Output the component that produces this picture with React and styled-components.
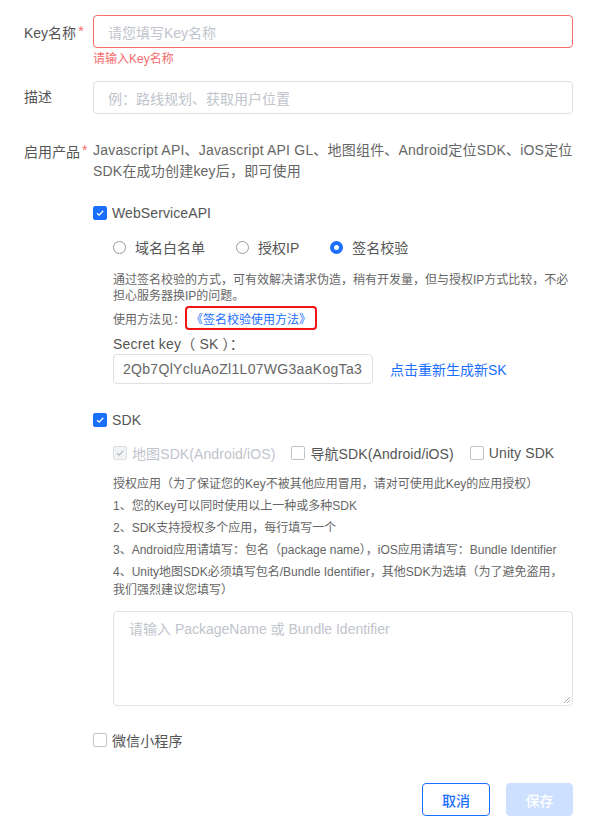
import styled, { createGlobalStyle, css } from "styled-components";

const GlobalStyle = createGlobalStyle`
  body {
    margin: 0;
    background: #fff;
    font-family: "Liberation Sans", "Noto Sans CJK SC", sans-serif;
    color: #555;
  }
`;

const blue = "#1a6fff";

const PageUI = styled.div`
  width: 597px;
  box-sizing: border-box;
  padding: 15px 24px 20px 24px;
`;

const RowUI = styled.div`
  display: grid;
  grid-template-columns: 69px minmax(0, 1fr);
  margin-bottom: ${(p) => p.$gap || 0}px;
`;

const LabelUI = styled.div`
  font-size: 14px;
  color: #555;
  line-height: ${(p) => p.$lh || 33}px;
  white-space: nowrap;
  & b {
    color: #f56c6c;
    font-weight: normal;
    margin-left: 2px;
    vertical-align: 2px;
  }
`;

const InputUI = styled.div`
  box-sizing: border-box;
  height: ${(p) => p.$h || 33}px;
  width: ${(p) => (p.$w ? p.$w + "px" : "100%")};
  border: 1px solid ${(p) => (p.$error ? "#f56c6c" : "#dcdfe6")};
  border-radius: 4px;
  padding: 0 ${(p) => p.$pad || 14}px;
  display: flex;
  align-items: center;
  font-size: 14px;
  letter-spacing: ${(p) => (p.$value ? "0.3px" : "0")};
  color: ${(p) => (p.$value ? "#666" : "#c0c4cc")};
  white-space: nowrap;
  overflow: hidden;
`;

const ErrorUI = styled.div`
  font-size: 12px;
  line-height: 18px;
  margin-top: 2px;
  color: #f56c6c;
`;

const IntroUI = styled.div`
  font-size: 14px;
  line-height: 21px;
  letter-spacing: 0.2px;
  color: #666;
`;

const CheckRowUI = styled.div`
  display: flex;
  align-items: center;
  height: 20px;
  white-space: nowrap;
  margin-top: ${(p) => p.$mt || 0}px;
`;

const CheckItemUI = styled.label`
  display: flex;
  align-items: center;
  gap: 5px;
  font-size: 14px;
  letter-spacing: 0.1px;
  color: ${(p) => (p.$disabled ? "#c0c4cc" : "#555")};
  margin-right: 16px;
`;

const BoxUI = styled.span`
  box-sizing: border-box;
  width: 14px;
  height: 14px;
  border-radius: 2px;
  border: 1px solid #bfc3cb;
  background: #fff;
  display: flex;
  align-items: center;
  justify-content: center;
  ${(p) =>
    p.$checked &&
    css`
      background: ${blue};
      border-color: ${blue};
    `}
  ${(p) =>
    p.$disabled &&
    css`
      background: #f2f3f5;
      border-color: #dcdfe6;
    `}
`;

const RadioItemUI = styled.label`
  display: flex;
  align-items: center;
  gap: 9px;
  font-size: 14px;
  color: #555;
  margin-right: 31px;
`;

const CircleUI = styled.span`
  box-sizing: border-box;
  width: 13px;
  height: 13px;
  border-radius: 50%;
  border: ${(p) => (p.$checked ? `4px solid ${blue}` : "1px solid #9a9a9a")};
  background: #fff;
`;

const SubUI = styled.div`
  margin-left: 20px;
`;

const SmallUI = styled.div`
  font-size: 12px;
  line-height: ${(p) => p.$lh || 16}px;
  color: #666;
  margin-top: ${(p) => p.$mt || 0}px;
`;

const UsageUI = styled.div`
  display: flex;
  align-items: center;
  font-size: 12px;
  color: #666;
  margin-top: 2px;
`;

const LinkBoxUI = styled.a`
  box-sizing: border-box;
  height: 24px;
  padding: 0 4px;
  border: 2px solid #f01414;
  border-radius: 4px;
  display: flex;
  align-items: center;
  color: ${blue};
  text-decoration: none;
`;

const SecretLabelUI = styled.div`
  font-size: 14px;
  line-height: 20px;
  letter-spacing: 0.2px;
  color: #555;
  margin-top: 4px;
`;

const SecretRowUI = styled.div`
  display: flex;
  align-items: center;
  gap: 17px;
`;

const RegenUI = styled.a`
  font-size: 14px;
  color: ${blue};
  text-decoration: none;
`;

const TextareaUI = styled.div`
  position: relative;
  box-sizing: border-box;
  height: 95px;
  margin-top: 12px;
  border: 1px solid #e0e2e8;
  border-radius: 4px;
  padding: 7px 15px;
  font-size: 14px;
  line-height: 20px;
  color: #c0c4cc;
`;

const GripUI = styled.svg`
  position: absolute;
  right: 1px;
  bottom: 1px;
`;

const FooterUI = styled.div`
  display: flex;
  justify-content: flex-end;
  gap: 16px;
  margin-top: 33px;
`;

const ButtonUI = styled.button`
  box-sizing: border-box;
  height: 33px;
  width: ${(p) => p.$w}px;
  border-radius: 4px;
  font-family: inherit;
  font-size: 14px;
  font-weight: 500;
  ${(p) =>
    p.$primary
      ? css`
          background: #cde0ff;
          border: 1px solid #cde0ff;
          color: #fff;
        `
      : css`
          background: #fff;
          border: 1px solid ${blue};
          color: ${blue};
        `}
`;

function Check({ checked, disabled }) {
  return (
    <BoxUI $checked={checked} $disabled={disabled}>
      {checked && (
        <svg width="10" height="10" viewBox="0 0 10 10">
          <path
            d="M2 5.2 L4.2 7.2 L8.2 2.8"
            fill="none"
            stroke={disabled ? "#b8bcc4" : "#fff"}
            strokeWidth="1.3"
          />
        </svg>
      )}
    </BoxUI>
  );
}

const notes = [
  "1、您的Key可以同时使用以上一种或多种SDK",
  "2、SDK支持授权多个应用，每行填写一个",
  "3、Android应用请填写：包名（package name），iOS应用请填写：Bundle Identifier",
  "4、Unity地图SDK必须填写包名/Bundle Identifier，其他SDK为选填（为了避免盗用，我们强烈建议您填写）",
];

export default function App() {
  return (
    <PageUI>
      <GlobalStyle />
      <RowUI $gap={13}>
        <LabelUI>
          Key名称<b>*</b>
        </LabelUI>
        <div>
          <InputUI $error>请您填写Key名称</InputUI>
          <ErrorUI>请输入Key名称</ErrorUI>
        </div>
      </RowUI>

      <RowUI $gap={26}>
        <LabelUI>描述</LabelUI>
        <InputUI>例：路线规划、获取用户位置</InputUI>
      </RowUI>

      <RowUI>
        <LabelUI $lh={21}>
          启用产品<b>*</b>
        </LabelUI>
        <div>
          <IntroUI>
            Javascript API、Javascript API GL、地图组件、Android定位SDK、iOS定位SDK在成功创建key后，即可使用
          </IntroUI>

          <CheckRowUI $mt={21}>
            <CheckItemUI>
              <Check checked />
              WebServiceAPI
            </CheckItemUI>
          </CheckRowUI>

          <SubUI>
            <CheckRowUI $mt={14}>
              <RadioItemUI>
                <CircleUI />
                域名白名单
              </RadioItemUI>
              <RadioItemUI>
                <CircleUI />
                授权IP
              </RadioItemUI>
              <RadioItemUI>
                <CircleUI $checked />
                签名校验
              </RadioItemUI>
            </CheckRowUI>
            <SmallUI $mt={15}>
              通过签名校验的方式，可有效解决请求伪造，稍有开发量，但与授权IP方式比较，不必担心服务器换IP的问题。
            </SmallUI>
            <UsageUI>
              使用方法见：
              <LinkBoxUI href="#">《签名校验使用方法》</LinkBoxUI>
            </UsageUI>
            <SecretLabelUI>Secret key（ SK ）：</SecretLabelUI>
            <SecretRowUI>
              <InputUI $w={260} $h={30} $pad={9} $value>
                2Qb7QlYcluAoZl1L07WG3aaKogTa3
              </InputUI>
              <RegenUI href="#">点击重新生成新SK</RegenUI>
            </SecretRowUI>
          </SubUI>

          <CheckRowUI $mt={26}>
            <CheckItemUI>
              <Check checked />
              SDK
            </CheckItemUI>
          </CheckRowUI>

          <SubUI>
            <CheckRowUI $mt={13}>
              <CheckItemUI $disabled>
                <Check checked disabled />
                地图SDK(Android/iOS)
              </CheckItemUI>
              <CheckItemUI>
                <Check />
                导航SDK(Android/iOS)
              </CheckItemUI>
              <CheckItemUI>
                <Check />
                Unity SDK
              </CheckItemUI>
            </CheckRowUI>
            <SmallUI $lh={18} $mt={12}>
              授权应用（为了保证您的Key不被其他应用冒用，请对可使用此Key的应用授权）
            </SmallUI>
            {notes.map((n) => (
              <SmallUI key={n} $lh={18} $mt={4}>
                {n}
              </SmallUI>
            ))}
            <TextareaUI>
              请输入 PackageName 或 Bundle Identifier
              <GripUI width="8" height="8" viewBox="0 0 8 8">
                <path d="M7 1 L1 7 M7 4 L4 7" stroke="#999" strokeWidth="0.8" />
              </GripUI>
            </TextareaUI>
          </SubUI>

          <CheckRowUI $mt={24}>
            <CheckItemUI>
              <Check />
              微信小程序
            </CheckItemUI>
          </CheckRowUI>

          <FooterUI>
            <ButtonUI $w={68}>取消</ButtonUI>
            <ButtonUI $w={67} $primary>
              保存
            </ButtonUI>
          </FooterUI>
        </div>
      </RowUI>
    </PageUI>
  );
}
